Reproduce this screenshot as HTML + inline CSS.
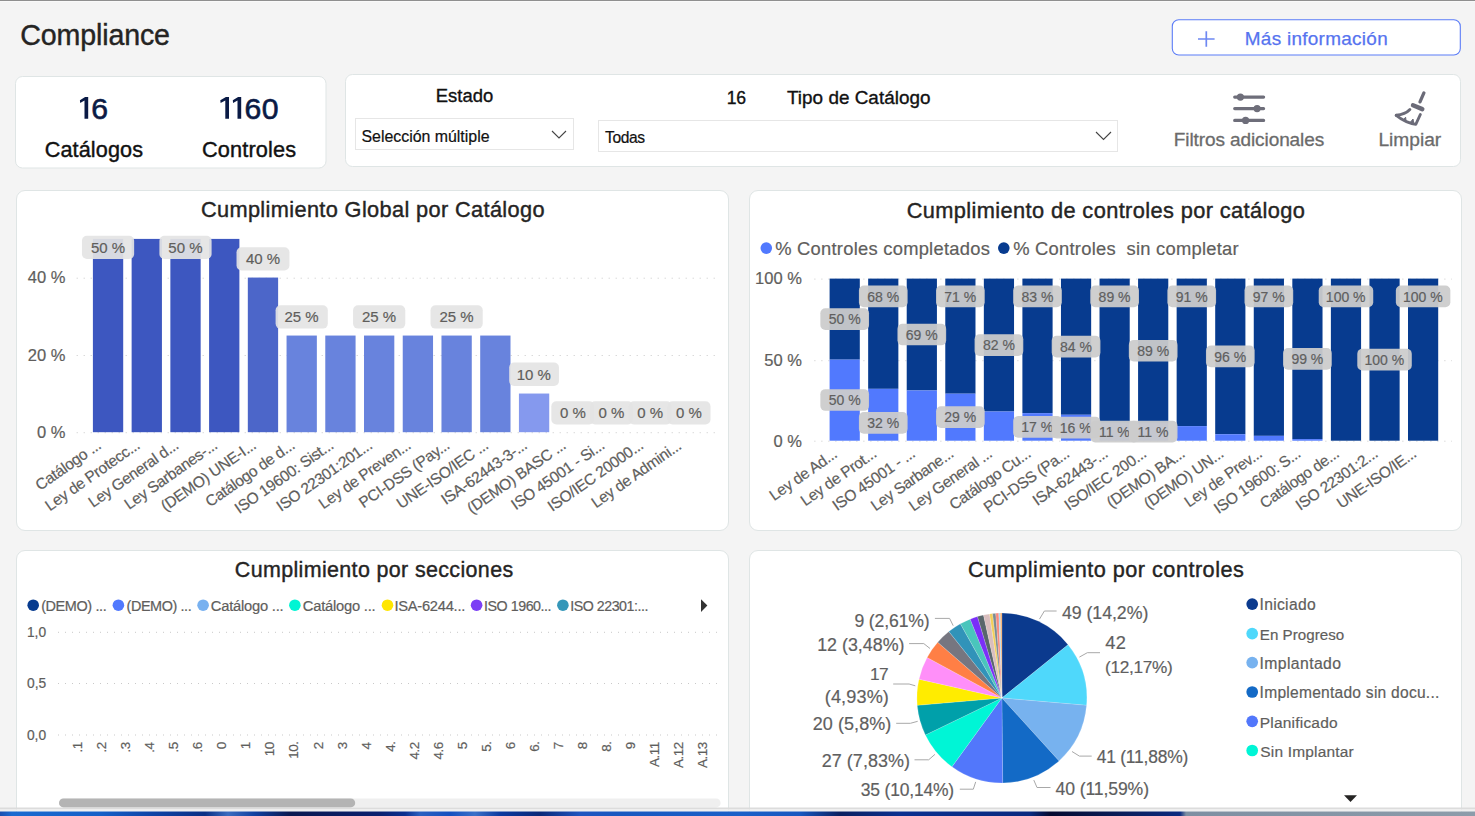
<!DOCTYPE html>
<html><head><meta charset="utf-8"><title>Compliance</title>
<style>html,body{margin:0;padding:0;background:#f4f4f4;overflow:hidden;width:1475px;height:816px}
svg{display:block} text{font-family:"Liberation Sans",sans-serif;white-space:pre}</style></head>
<body><svg width="1475" height="816" viewBox="0 0 1475 816">
<rect x="0" y="0" width="1475" height="816" fill="#f4f4f4"/>
<rect x="0" y="0" width="1475" height="1" fill="#8f8f8f"/>
<rect x="0" y="1" width="1475" height="1" fill="#f9f9f9"/>
<text x="20.27" y="44.70" font-size="28.60" letter-spacing="-0.137" fill="#252423" stroke="#252423" stroke-width="0.4">Compliance</text>
<rect x="1172.30" y="19.70" width="288.00" height="35.30" rx="6.5" fill="#ffffff" stroke="#5b7cf7" stroke-width="1.1"/>
<path d="M1198 39H1214.6M1206.3 31.2V46.7" stroke="#6e88f2" stroke-width="1.7" fill="none"/>
<text x="1244.78" y="44.70" font-size="18.96" letter-spacing="0.285" fill="#5673ef" stroke="#5673ef" stroke-width="0.25">Más información</text>
<rect x="15.50" y="76.50" width="310.50" height="91.50" rx="7" fill="#ffffff" stroke="#dfe5e5" stroke-width="1"/>
<path d="M88.20 97.0V118.8H84.50V100.60L80.20 102.90L79.90 100.30L85.10 97.0Z" fill="#0a1a45"/>
<path d="M229.00 97.0V118.8H225.30V100.60L220.60 102.90L220.30 100.30L225.90 97.0Z" fill="#0a1a45"/>
<path d="M241.20 97.0V118.8H237.50V100.60L233.10 102.90L232.80 100.30L238.10 97.0Z" fill="#0a1a45"/>
<text x="91.19" y="118.60" font-size="30.20" letter-spacing="0.000" fill="#0a1a45" stroke="#0a1a45" stroke-width="0.6">6</text>
<text x="244.49" y="118.60" font-size="30.20" letter-spacing="0.000" fill="#0a1a45" stroke="#0a1a45" stroke-width="0.6">6</text>
<text x="261.84" y="118.60" font-size="30.20" letter-spacing="0.000" fill="#0a1a45" stroke="#0a1a45" stroke-width="0.6">0</text>
<text x="44.72" y="156.80" font-size="21.65" letter-spacing="0.109" fill="#111111" stroke="#111111" stroke-width="0.4">Catálogos</text>
<text x="201.91" y="156.80" font-size="21.74" letter-spacing="0.152" fill="#111111" stroke="#111111" stroke-width="0.4">Controles</text>
<rect x="345.50" y="74.50" width="1115.00" height="92.00" rx="7" fill="#ffffff" stroke="#dfe5e5" stroke-width="1"/>
<text x="435.83" y="102.00" font-size="18.41" letter-spacing="0.003" fill="#111111" stroke="#111111" stroke-width="0.35">Estado</text>
<rect x="355.50" y="118.50" width="218.00" height="31.00" rx="0" fill="#ffffff" stroke="#e6e6e6" stroke-width="1"/>
<text x="361.48" y="141.90" font-size="15.92" letter-spacing="-0.009" fill="#111111" stroke="#111111" stroke-width="0.2">Selección múltiple</text>
<path d="M552 131L559 138L566 131" stroke="#444" stroke-width="1.1" fill="none"/>
<text x="726.78" y="103.70" font-size="17.60" letter-spacing="-0.229" fill="#111111" stroke="#111111" stroke-width="0.35">16</text>
<text x="787.02" y="103.70" font-size="18.89" letter-spacing="0.025" fill="#111111" stroke="#111111" stroke-width="0.35">Tipo de Catálogo</text>
<rect x="598.50" y="120.50" width="519.00" height="31.00" rx="0" fill="#ffffff" stroke="#e6e6e6" stroke-width="1"/>
<text x="605.09" y="142.90" font-size="15.62" letter-spacing="-0.403" fill="#111111" stroke="#111111" stroke-width="0.2">Todas</text>
<path d="M1096 132L1103.5 139.5L1111 132" stroke="#444" stroke-width="1.1" fill="none"/>
<g stroke="#6e6e7a" stroke-width="3.2" stroke-linecap="round" fill="#6e6e7a"><path d="M1234.7 97.1H1263.6M1234.7 108.6H1263.6M1234.7 120.4H1263.6"/><circle cx="1240.4" cy="97.1" r="2" /><circle cx="1257.1" cy="108.6" r="2"/><circle cx="1245.6" cy="120.4" r="2"/></g>
<text x="1173.78" y="145.60" font-size="19.04" letter-spacing="-0.104" fill="#6b6b6b" stroke="#6b6b6b" stroke-width="0.3">Filtros adicionales</text>
<g transform="translate(1385,85)" stroke="#6b6b78" fill="none" stroke-linecap="round" stroke-linejoin="round"><path d="M38.9 7.9 L35 16.9" stroke-width="3.3"/><path d="M28 20.3 L37.3 24.1" stroke-width="4.4"/><path d="M24.9 24.6 Q20.2 29.6 11.2 30.3" stroke-width="2.9"/><path d="M11.2 30.3 Q20 37.4 30.8 39.4 L35.4 29.4" stroke-width="2.8"/><path d="M18.8 34.4 L20.6 32.2 L21 35.2Z M25.8 36.8 L28 34 L28.6 37.4Z" fill="#6b6b78" stroke-width="1"/></g>
<text x="1378.46" y="145.60" font-size="19.21" letter-spacing="-0.034" fill="#6b6b6b" stroke="#6b6b6b" stroke-width="0.3">Limpiar</text>
<rect x="16.50" y="190.50" width="712.00" height="340.00" rx="8.5" fill="#ffffff" stroke="#dfe5e5" stroke-width="1"/>
<rect x="749.50" y="190.50" width="712.00" height="340.00" rx="8.5" fill="#ffffff" stroke="#dfe5e5" stroke-width="1"/>
<rect x="16.50" y="550.50" width="712.00" height="280.00" rx="8.5" fill="#ffffff" stroke="#dfe5e5" stroke-width="1"/>
<rect x="749.50" y="550.50" width="712.00" height="280.00" rx="8.5" fill="#ffffff" stroke="#dfe5e5" stroke-width="1"/>
<text x="200.91" y="217.00" font-size="21.75" letter-spacing="0.361" fill="#252423" stroke="#252423" stroke-width="0.4">Cumplimiento Global por Catálogo</text>
<path d="M76.7 278.2H718" stroke="#c9c9c9" stroke-width="1" stroke-dasharray="1 6"/>
<path d="M76.7 355.5H718" stroke="#c9c9c9" stroke-width="1" stroke-dasharray="1 6"/>
<path d="M76.7 432.7H718" stroke="#c9c9c9" stroke-width="1" stroke-dasharray="1 6"/>
<text x="27.81" y="282.70" font-size="16.52" letter-spacing="0.000" fill="#605e5c" stroke="#605e5c" stroke-width="0.2">40 %</text>
<text x="27.81" y="360.90" font-size="16.52" letter-spacing="0.000" fill="#605e5c" stroke="#605e5c" stroke-width="0.2">20 %</text>
<text x="37.00" y="438.00" font-size="16.52" letter-spacing="0.000" fill="#605e5c" stroke="#605e5c" stroke-width="0.2">0 %</text>
<rect x="92.90" y="238.90" width="30.30" height="193.30" rx="0" fill="#3d57c0"/>
<rect x="131.63" y="238.90" width="30.30" height="193.30" rx="0" fill="#3d57c0"/>
<rect x="170.36" y="238.90" width="30.30" height="193.30" rx="0" fill="#3d57c0"/>
<rect x="209.09" y="238.90" width="30.30" height="193.30" rx="0" fill="#3d57c0"/>
<rect x="247.82" y="277.56" width="30.30" height="154.64" rx="0" fill="#4c66c9"/>
<rect x="286.55" y="335.55" width="30.30" height="96.65" rx="0" fill="#6883dd"/>
<rect x="325.28" y="335.55" width="30.30" height="96.65" rx="0" fill="#6883dd"/>
<rect x="364.01" y="335.55" width="30.30" height="96.65" rx="0" fill="#6883dd"/>
<rect x="402.74" y="335.55" width="30.30" height="96.65" rx="0" fill="#6883dd"/>
<rect x="441.47" y="335.55" width="30.30" height="96.65" rx="0" fill="#6883dd"/>
<rect x="480.20" y="335.55" width="30.30" height="96.65" rx="0" fill="#6883dd"/>
<rect x="518.93" y="393.54" width="30.30" height="38.66" rx="0" fill="#8599ee"/>
<rect x="81.95" y="235.70" width="52.20" height="23.30" rx="5" fill="rgba(228,228,228,0.92)"/>
<text x="90.91" y="252.60" font-size="15.00" fill="#605e5c" stroke="#605e5c" stroke-width="0.2">50 %</text>
<rect x="159.41" y="235.70" width="52.20" height="23.30" rx="5" fill="rgba(228,228,228,0.92)"/>
<text x="168.37" y="252.60" font-size="15.00" fill="#605e5c" stroke="#605e5c" stroke-width="0.2">50 %</text>
<rect x="236.52" y="247.20" width="52.90" height="23.30" rx="5" fill="rgba(228,228,228,0.92)"/>
<text x="245.98" y="264.10" font-size="15.00" fill="#605e5c" stroke="#605e5c" stroke-width="0.2">40 %</text>
<rect x="275.60" y="305.30" width="52.20" height="23.30" rx="5" fill="rgba(228,228,228,0.92)"/>
<text x="284.49" y="322.20" font-size="15.00" fill="#605e5c" stroke="#605e5c" stroke-width="0.2">25 %</text>
<rect x="353.06" y="305.30" width="52.20" height="23.30" rx="5" fill="rgba(228,228,228,0.92)"/>
<text x="361.95" y="322.20" font-size="15.00" fill="#605e5c" stroke="#605e5c" stroke-width="0.2">25 %</text>
<rect x="430.52" y="305.30" width="52.20" height="23.30" rx="5" fill="rgba(228,228,228,0.92)"/>
<text x="439.41" y="322.20" font-size="15.00" fill="#605e5c" stroke="#605e5c" stroke-width="0.2">25 %</text>
<rect x="509.18" y="362.60" width="49.80" height="23.30" rx="5" fill="rgba(228,228,228,0.92)"/>
<text x="516.68" y="379.50" font-size="15.00" fill="#605e5c" stroke="#605e5c" stroke-width="0.2">10 %</text>
<rect x="551.31" y="401.20" width="43.00" height="23.30" rx="5" fill="rgba(228,228,228,0.92)"/>
<text x="559.88" y="418.10" font-size="15.00" fill="#605e5c" stroke="#605e5c" stroke-width="0.2">0 %</text>
<rect x="590.04" y="401.20" width="43.00" height="23.30" rx="5" fill="rgba(228,228,228,0.92)"/>
<text x="598.61" y="418.10" font-size="15.00" fill="#605e5c" stroke="#605e5c" stroke-width="0.2">0 %</text>
<rect x="628.77" y="401.20" width="43.00" height="23.30" rx="5" fill="rgba(228,228,228,0.92)"/>
<text x="637.34" y="418.10" font-size="15.00" fill="#605e5c" stroke="#605e5c" stroke-width="0.2">0 %</text>
<rect x="667.50" y="401.20" width="43.00" height="23.30" rx="5" fill="rgba(228,228,228,0.92)"/>
<text x="676.07" y="418.10" font-size="15.00" fill="#605e5c" stroke="#605e5c" stroke-width="0.2">0 %</text>
<text x="40.08" y="490.99" font-size="15.50" letter-spacing="-0.3" fill="#605e5c" stroke="#605e5c" stroke-width="0.2" transform="rotate(-35 40.08 490.99)">Catálogo ...</text>
<text x="49.70" y="511.38" font-size="15.50" letter-spacing="-0.3" fill="#605e5c" stroke="#605e5c" stroke-width="0.2" transform="rotate(-35 49.70 511.38)">Ley de Protecc...</text>
<text x="93.12" y="508.10" font-size="15.50" letter-spacing="-0.3" fill="#605e5c" stroke="#605e5c" stroke-width="0.2" transform="rotate(-35 93.12 508.10)">Ley General d...</text>
<text x="129.03" y="510.07" font-size="15.50" letter-spacing="-0.3" fill="#605e5c" stroke="#605e5c" stroke-width="0.2" transform="rotate(-35 129.03 510.07)">Ley Sarbanes-...</text>
<text x="165.46" y="511.68" font-size="15.50" letter-spacing="-0.3" fill="#605e5c" stroke="#605e5c" stroke-width="0.2" transform="rotate(-35 165.46 511.68)">(DEMO) UNE-I...</text>
<text x="210.00" y="507.61" font-size="15.50" letter-spacing="-0.3" fill="#605e5c" stroke="#605e5c" stroke-width="0.2" transform="rotate(-35 210.00 507.61)">Catálogo de d...</text>
<text x="239.36" y="514.17" font-size="15.50" letter-spacing="-0.3" fill="#605e5c" stroke="#605e5c" stroke-width="0.2" transform="rotate(-35 239.36 514.17)">ISO 19600: Sist...</text>
<text x="281.11" y="512.06" font-size="15.50" letter-spacing="-0.3" fill="#605e5c" stroke="#605e5c" stroke-width="0.2" transform="rotate(-35 281.11 512.06)">ISO 22301:201...</text>
<text x="323.38" y="509.58" font-size="15.50" letter-spacing="-0.3" fill="#605e5c" stroke="#605e5c" stroke-width="0.2" transform="rotate(-35 323.38 509.58)">Ley de Preven...</text>
<text x="363.55" y="508.57" font-size="15.50" letter-spacing="-0.3" fill="#605e5c" stroke="#605e5c" stroke-width="0.2" transform="rotate(-35 363.55 508.57)">PCI-DSS (Pay...</text>
<text x="401.34" y="509.23" font-size="15.50" letter-spacing="-0.3" fill="#605e5c" stroke="#605e5c" stroke-width="0.2" transform="rotate(-35 401.34 509.23)">UNE-ISO/IEC ...</text>
<text x="445.69" y="505.30" font-size="15.50" letter-spacing="-0.3" fill="#605e5c" stroke="#605e5c" stroke-width="0.2" transform="rotate(-35 445.69 505.30)">ISA-62443-3-...</text>
<text x="471.76" y="514.16" font-size="15.50" letter-spacing="-0.3" fill="#605e5c" stroke="#605e5c" stroke-width="0.2" transform="rotate(-35 471.76 514.16)">(DEMO) BASC ...</text>
<text x="515.87" y="510.39" font-size="15.50" letter-spacing="-0.3" fill="#605e5c" stroke="#605e5c" stroke-width="0.2" transform="rotate(-35 515.87 510.39)">ISO 45001 - Si...</text>
<text x="552.24" y="512.05" font-size="15.50" letter-spacing="-0.3" fill="#605e5c" stroke="#605e5c" stroke-width="0.2" transform="rotate(-35 552.24 512.05)">ISO/IEC 20000...</text>
<text x="595.91" y="508.59" font-size="15.50" letter-spacing="-0.3" fill="#605e5c" stroke="#605e5c" stroke-width="0.2" transform="rotate(-35 595.91 508.59)">Ley de Admini...</text>
<text x="906.71" y="217.80" font-size="21.81" letter-spacing="0.379" fill="#252423" stroke="#252423" stroke-width="0.4">Cumplimiento de controles por catálogo</text>
<circle cx="766.3" cy="248.1" r="5.8" fill="#5179fe"/>
<circle cx="1003.8" cy="248.1" r="5.8" fill="#073b8f"/>
<text x="775.16" y="254.50" font-size="18.34" letter-spacing="0.264" fill="#605e5c" stroke="#605e5c" stroke-width="0.2">% Controles completados</text>
<text x="1013.16" y="254.50" font-size="18.35" letter-spacing="0.251" fill="#605e5c" stroke="#605e5c" stroke-width="0.2">% Controles  sin completar</text>
<path d="M814.4 279.1H1452" stroke="#c9c9c9" stroke-width="1" stroke-dasharray="1 6"/>
<path d="M814.4 360.7H1452" stroke="#c9c9c9" stroke-width="1" stroke-dasharray="1 6"/>
<path d="M814.4 441.2H1452" stroke="#c9c9c9" stroke-width="1" stroke-dasharray="1 6"/>
<text x="755.12" y="284.30" font-size="16.52" letter-spacing="0.000" fill="#605e5c" stroke="#605e5c" stroke-width="0.2">100 %</text>
<text x="764.31" y="365.90" font-size="16.52" letter-spacing="0.000" fill="#605e5c" stroke="#605e5c" stroke-width="0.2">50 %</text>
<text x="773.50" y="447.10" font-size="16.52" letter-spacing="0.000" fill="#605e5c" stroke="#605e5c" stroke-width="0.2">0 %</text>
<rect x="829.60" y="278.60" width="30.20" height="81.05" rx="0" fill="#073b8f"/>
<rect x="829.60" y="359.65" width="30.20" height="81.05" rx="0" fill="#5179fe"/>
<rect x="868.16" y="278.60" width="30.20" height="110.23" rx="0" fill="#073b8f"/>
<rect x="868.16" y="388.83" width="30.20" height="51.87" rx="0" fill="#5179fe"/>
<rect x="906.72" y="278.60" width="30.20" height="111.85" rx="0" fill="#073b8f"/>
<rect x="906.72" y="390.45" width="30.20" height="50.25" rx="0" fill="#5179fe"/>
<rect x="945.28" y="278.60" width="30.20" height="115.09" rx="0" fill="#073b8f"/>
<rect x="945.28" y="393.69" width="30.20" height="47.01" rx="0" fill="#5179fe"/>
<rect x="983.84" y="278.60" width="30.20" height="132.92" rx="0" fill="#073b8f"/>
<rect x="983.84" y="411.52" width="30.20" height="29.18" rx="0" fill="#5179fe"/>
<rect x="1022.40" y="278.60" width="30.20" height="134.54" rx="0" fill="#073b8f"/>
<rect x="1022.40" y="413.14" width="30.20" height="27.56" rx="0" fill="#5179fe"/>
<rect x="1060.96" y="278.60" width="30.20" height="136.16" rx="0" fill="#073b8f"/>
<rect x="1060.96" y="414.76" width="30.20" height="25.94" rx="0" fill="#5179fe"/>
<rect x="1099.52" y="278.60" width="30.20" height="144.27" rx="0" fill="#073b8f"/>
<rect x="1099.52" y="422.87" width="30.20" height="17.83" rx="0" fill="#5179fe"/>
<rect x="1138.08" y="278.60" width="30.20" height="144.27" rx="0" fill="#073b8f"/>
<rect x="1138.08" y="422.87" width="30.20" height="17.83" rx="0" fill="#5179fe"/>
<rect x="1176.64" y="278.60" width="30.20" height="147.51" rx="0" fill="#073b8f"/>
<rect x="1176.64" y="426.11" width="30.20" height="14.59" rx="0" fill="#5179fe"/>
<rect x="1215.20" y="278.60" width="30.20" height="155.62" rx="0" fill="#073b8f"/>
<rect x="1215.20" y="434.22" width="30.20" height="6.48" rx="0" fill="#5179fe"/>
<rect x="1253.76" y="278.60" width="30.20" height="157.24" rx="0" fill="#073b8f"/>
<rect x="1253.76" y="435.84" width="30.20" height="4.86" rx="0" fill="#5179fe"/>
<rect x="1292.32" y="278.60" width="30.20" height="160.48" rx="0" fill="#073b8f"/>
<rect x="1292.32" y="439.08" width="30.20" height="1.62" rx="0" fill="#5179fe"/>
<rect x="1330.88" y="278.60" width="30.20" height="162.10" rx="0" fill="#073b8f"/>
<rect x="1369.44" y="278.60" width="30.20" height="162.10" rx="0" fill="#073b8f"/>
<rect x="1408.00" y="278.60" width="30.20" height="162.10" rx="0" fill="#073b8f"/>
<rect x="820.35" y="389.15" width="48.70" height="21.70" rx="5" fill="rgba(204,204,204,0.94)"/>
<text x="828.70" y="405.10" font-size="14.00" fill="#5f5f5f" stroke="#5f5f5f" stroke-width="0.2">50 %</text>
<rect x="858.91" y="412.05" width="48.70" height="21.70" rx="5" fill="rgba(204,204,204,0.94)"/>
<text x="867.30" y="428.00" font-size="14.00" fill="#5f5f5f" stroke="#5f5f5f" stroke-width="0.2">32 %</text>
<rect x="936.03" y="406.35" width="48.70" height="21.70" rx="5" fill="rgba(204,204,204,0.94)"/>
<text x="944.31" y="422.30" font-size="14.00" fill="#5f5f5f" stroke="#5f5f5f" stroke-width="0.2">29 %</text>
<rect x="1013.15" y="415.95" width="48.70" height="21.70" rx="5" fill="rgba(204,204,204,0.94)"/>
<text x="1021.26" y="431.90" font-size="14.00" fill="#5f5f5f" stroke="#5f5f5f" stroke-width="0.2">17 %</text>
<rect x="1051.71" y="416.75" width="48.70" height="21.70" rx="5" fill="rgba(204,204,204,0.94)"/>
<text x="1059.82" y="432.70" font-size="14.00" fill="#5f5f5f" stroke="#5f5f5f" stroke-width="0.2">16 %</text>
<rect x="1090.27" y="420.85" width="48.70" height="21.70" rx="5" fill="rgba(204,204,204,0.94)"/>
<text x="1098.90" y="436.80" font-size="14.00" fill="#5f5f5f" stroke="#5f5f5f" stroke-width="0.2">11 %</text>
<rect x="1128.83" y="420.85" width="48.70" height="21.70" rx="5" fill="rgba(204,204,204,0.94)"/>
<text x="1137.46" y="436.80" font-size="14.00" fill="#5f5f5f" stroke="#5f5f5f" stroke-width="0.2">11 %</text>
<rect x="820.35" y="308.27" width="48.70" height="21.70" rx="5" fill="rgba(204,204,204,0.94)"/>
<text x="828.70" y="324.23" font-size="14.00" fill="#5f5f5f" stroke="#5f5f5f" stroke-width="0.2">50 %</text>
<rect x="858.91" y="285.55" width="48.70" height="21.70" rx="5" fill="rgba(204,204,204,0.94)"/>
<text x="867.19" y="301.50" font-size="14.00" fill="#5f5f5f" stroke="#5f5f5f" stroke-width="0.2">68 %</text>
<rect x="897.47" y="323.67" width="48.70" height="21.70" rx="5" fill="rgba(204,204,204,0.94)"/>
<text x="905.75" y="339.62" font-size="14.00" fill="#5f5f5f" stroke="#5f5f5f" stroke-width="0.2">69 %</text>
<rect x="936.03" y="285.55" width="48.70" height="21.70" rx="5" fill="rgba(204,204,204,0.94)"/>
<text x="944.31" y="301.50" font-size="14.00" fill="#5f5f5f" stroke="#5f5f5f" stroke-width="0.2">71 %</text>
<rect x="974.59" y="334.21" width="48.70" height="21.70" rx="5" fill="rgba(204,204,204,0.94)"/>
<text x="982.94" y="350.16" font-size="14.00" fill="#5f5f5f" stroke="#5f5f5f" stroke-width="0.2">82 %</text>
<rect x="1013.15" y="285.55" width="48.70" height="21.70" rx="5" fill="rgba(204,204,204,0.94)"/>
<text x="1021.50" y="301.50" font-size="14.00" fill="#5f5f5f" stroke="#5f5f5f" stroke-width="0.2">83 %</text>
<rect x="1051.71" y="335.83" width="48.70" height="21.70" rx="5" fill="rgba(204,204,204,0.94)"/>
<text x="1060.06" y="351.78" font-size="14.00" fill="#5f5f5f" stroke="#5f5f5f" stroke-width="0.2">84 %</text>
<rect x="1090.27" y="285.55" width="48.70" height="21.70" rx="5" fill="rgba(204,204,204,0.94)"/>
<text x="1098.62" y="301.50" font-size="14.00" fill="#5f5f5f" stroke="#5f5f5f" stroke-width="0.2">89 %</text>
<rect x="1128.83" y="339.88" width="48.70" height="21.70" rx="5" fill="rgba(204,204,204,0.94)"/>
<text x="1137.18" y="355.83" font-size="14.00" fill="#5f5f5f" stroke="#5f5f5f" stroke-width="0.2">89 %</text>
<rect x="1167.39" y="285.55" width="48.70" height="21.70" rx="5" fill="rgba(204,204,204,0.94)"/>
<text x="1175.71" y="301.50" font-size="14.00" fill="#5f5f5f" stroke="#5f5f5f" stroke-width="0.2">91 %</text>
<rect x="1205.95" y="345.56" width="48.70" height="21.70" rx="5" fill="rgba(204,204,204,0.94)"/>
<text x="1214.27" y="361.51" font-size="14.00" fill="#5f5f5f" stroke="#5f5f5f" stroke-width="0.2">96 %</text>
<rect x="1244.51" y="285.55" width="48.70" height="21.70" rx="5" fill="rgba(204,204,204,0.94)"/>
<text x="1252.83" y="301.50" font-size="14.00" fill="#5f5f5f" stroke="#5f5f5f" stroke-width="0.2">97 %</text>
<rect x="1283.07" y="347.99" width="48.70" height="21.70" rx="5" fill="rgba(204,204,204,0.94)"/>
<text x="1291.39" y="363.94" font-size="14.00" fill="#5f5f5f" stroke="#5f5f5f" stroke-width="0.2">99 %</text>
<rect x="1318.73" y="285.55" width="54.50" height="21.70" rx="5" fill="rgba(204,204,204,0.94)"/>
<text x="1325.85" y="301.50" font-size="14.00" fill="#5f5f5f" stroke="#5f5f5f" stroke-width="0.2">100 %</text>
<rect x="1357.29" y="348.80" width="54.50" height="21.70" rx="5" fill="rgba(204,204,204,0.94)"/>
<text x="1364.41" y="364.75" font-size="14.00" fill="#5f5f5f" stroke="#5f5f5f" stroke-width="0.2">100 %</text>
<rect x="1395.85" y="285.55" width="54.50" height="21.70" rx="5" fill="rgba(204,204,204,0.94)"/>
<text x="1402.97" y="301.50" font-size="14.00" fill="#5f5f5f" stroke="#5f5f5f" stroke-width="0.2">100 %</text>
<text x="774.06" y="501.37" font-size="15.50" letter-spacing="-0.3" fill="#605e5c" stroke="#605e5c" stroke-width="0.2" transform="rotate(-35 774.06 501.37)">Ley de Ad...</text>
<text x="805.35" y="506.46" font-size="15.50" letter-spacing="-0.3" fill="#605e5c" stroke="#605e5c" stroke-width="0.2" transform="rotate(-35 805.35 506.46)">Ley de Prot...</text>
<text x="837.10" y="511.23" font-size="15.50" letter-spacing="-0.3" fill="#605e5c" stroke="#605e5c" stroke-width="0.2" transform="rotate(-35 837.10 511.23)">ISO 45001 - ...</text>
<text x="875.40" y="511.41" font-size="15.50" letter-spacing="-0.3" fill="#605e5c" stroke="#605e5c" stroke-width="0.2" transform="rotate(-35 875.40 511.41)">Ley Sarbane...</text>
<text x="913.52" y="511.72" font-size="15.50" letter-spacing="-0.3" fill="#605e5c" stroke="#605e5c" stroke-width="0.2" transform="rotate(-35 913.52 511.72)">Ley General ...</text>
<text x="953.94" y="510.41" font-size="15.50" letter-spacing="-0.3" fill="#605e5c" stroke="#605e5c" stroke-width="0.2" transform="rotate(-35 953.94 510.41)">Catálogo Cu...</text>
<text x="988.30" y="513.36" font-size="15.50" letter-spacing="-0.3" fill="#605e5c" stroke="#605e5c" stroke-width="0.2" transform="rotate(-35 988.30 513.36)">PCI-DSS (Pa...</text>
<text x="1037.17" y="506.14" font-size="15.50" letter-spacing="-0.3" fill="#605e5c" stroke="#605e5c" stroke-width="0.2" transform="rotate(-35 1037.17 506.14)">ISA-62443-...</text>
<text x="1068.93" y="510.90" font-size="15.50" letter-spacing="-0.3" fill="#605e5c" stroke="#605e5c" stroke-width="0.2" transform="rotate(-35 1068.93 510.90)">ISO/IEC 200...</text>
<text x="1111.26" y="508.26" font-size="15.50" letter-spacing="-0.3" fill="#605e5c" stroke="#605e5c" stroke-width="0.2" transform="rotate(-35 1111.26 508.26)">(DEMO) BA...</text>
<text x="1148.42" y="509.24" font-size="15.50" letter-spacing="-0.3" fill="#605e5c" stroke="#605e5c" stroke-width="0.2" transform="rotate(-35 1148.42 509.24)">(DEMO) UN...</text>
<text x="1189.07" y="507.78" font-size="15.50" letter-spacing="-0.3" fill="#605e5c" stroke="#605e5c" stroke-width="0.2" transform="rotate(-35 1189.07 507.78)">Ley de Prev...</text>
<text x="1218.46" y="514.20" font-size="15.50" letter-spacing="-0.3" fill="#605e5c" stroke="#605e5c" stroke-width="0.2" transform="rotate(-35 1218.46 514.20)">ISO 19600: S...</text>
<text x="1264.53" y="508.94" font-size="15.50" letter-spacing="-0.3" fill="#605e5c" stroke="#605e5c" stroke-width="0.2" transform="rotate(-35 1264.53 508.94)">Catálogo de...</text>
<text x="1300.27" y="510.91" font-size="15.50" letter-spacing="-0.3" fill="#605e5c" stroke="#605e5c" stroke-width="0.2" transform="rotate(-35 1300.27 510.91)">ISO 22301:2...</text>
<text x="1341.45" y="509.08" font-size="15.50" letter-spacing="-0.3" fill="#605e5c" stroke="#605e5c" stroke-width="0.2" transform="rotate(-35 1341.45 509.08)">UNE-ISO/IE...</text>
<text x="234.83" y="577.00" font-size="21.45" letter-spacing="0.361" fill="#252423" stroke="#252423" stroke-width="0.4">Cumplimiento por secciones</text>
<circle cx="33.2" cy="605.2" r="5.8" fill="#073b8f"/>
<text x="41.13" y="611.00" font-size="14.46" letter-spacing="-0.392" fill="#605e5c" stroke="#605e5c" stroke-width="0.2">(DEMO) ...</text>
<circle cx="118.4" cy="605.2" r="5.8" fill="#5179fe"/>
<text x="126.54" y="611.00" font-size="14.41" letter-spacing="-0.414" fill="#605e5c" stroke="#605e5c" stroke-width="0.2">(DEMO) ...</text>
<circle cx="203.1" cy="605.2" r="5.8" fill="#78b1f0"/>
<text x="210.86" y="611.00" font-size="14.72" letter-spacing="-0.224" fill="#605e5c" stroke="#605e5c" stroke-width="0.2">Catálogo ...</text>
<circle cx="294.9" cy="605.2" r="5.8" fill="#00f5d4"/>
<text x="302.86" y="611.00" font-size="14.72" letter-spacing="-0.224" fill="#605e5c" stroke="#605e5c" stroke-width="0.2">Catálogo ...</text>
<circle cx="387.5" cy="605.2" r="5.8" fill="#ffe600"/>
<text x="394.38" y="611.00" font-size="14.70" letter-spacing="-0.251" fill="#605e5c" stroke="#605e5c" stroke-width="0.2">ISA-6244...</text>
<circle cx="476.6" cy="605.2" r="5.8" fill="#7b3ff5"/>
<text x="484.02" y="611.00" font-size="14.27" letter-spacing="-0.464" fill="#605e5c" stroke="#605e5c" stroke-width="0.2">ISO 1960...</text>
<circle cx="562.9" cy="605.2" r="5.8" fill="#3597b9"/>
<text x="570.22" y="611.00" font-size="14.23" letter-spacing="-0.469" fill="#605e5c" stroke="#605e5c" stroke-width="0.2">ISO 22301:...</text>
<path d="M701 599.3L707.4 605.6L701 612Z" fill="#333"/>
<path d="M58 632.3H720" stroke="#c9c9c9" stroke-width="1" stroke-dasharray="1 6"/>
<path d="M58 683.5H720" stroke="#c9c9c9" stroke-width="1" stroke-dasharray="1 6"/>
<path d="M58 735.0H720" stroke="#c9c9c9" stroke-width="1" stroke-dasharray="1 6"/>
<text x="26.96" y="637.10" font-size="13.77" letter-spacing="0.000" fill="#605e5c" stroke="#605e5c" stroke-width="0.2">1,0</text>
<text x="27.03" y="687.80" font-size="13.77" letter-spacing="0.000" fill="#605e5c" stroke="#605e5c" stroke-width="0.2">0,5</text>
<text x="26.96" y="739.60" font-size="13.77" letter-spacing="0.000" fill="#605e5c" stroke="#605e5c" stroke-width="0.2">0,0</text>
<text x="81.92" y="752.41" font-size="13.40" letter-spacing="-0.45" fill="#605e5c" stroke="#605e5c" stroke-width="0.2" transform="rotate(-90 81.92 752.41)">.1</text>
<text x="105.98" y="752.41" font-size="13.40" letter-spacing="-0.45" fill="#605e5c" stroke="#605e5c" stroke-width="0.2" transform="rotate(-90 105.98 752.41)">.2</text>
<text x="130.04" y="752.47" font-size="13.40" letter-spacing="-0.45" fill="#605e5c" stroke="#605e5c" stroke-width="0.2" transform="rotate(-90 130.04 752.47)">.3</text>
<text x="154.10" y="752.67" font-size="13.40" letter-spacing="-0.45" fill="#605e5c" stroke="#605e5c" stroke-width="0.2" transform="rotate(-90 154.10 752.67)">.4</text>
<text x="178.16" y="752.47" font-size="13.40" letter-spacing="-0.45" fill="#605e5c" stroke="#605e5c" stroke-width="0.2" transform="rotate(-90 178.16 752.47)">.5</text>
<text x="202.22" y="752.47" font-size="13.40" letter-spacing="-0.45" fill="#605e5c" stroke="#605e5c" stroke-width="0.2" transform="rotate(-90 202.22 752.47)">.6</text>
<text x="226.28" y="749.27" font-size="13.40" letter-spacing="-0.45" fill="#605e5c" stroke="#605e5c" stroke-width="0.2" transform="rotate(-90 226.28 749.27)">0</text>
<text x="250.34" y="749.13" font-size="13.40" letter-spacing="-0.45" fill="#605e5c" stroke="#605e5c" stroke-width="0.2" transform="rotate(-90 250.34 749.13)">1</text>
<text x="274.40" y="756.27" font-size="13.40" letter-spacing="-0.45" fill="#605e5c" stroke="#605e5c" stroke-width="0.2" transform="rotate(-90 274.40 756.27)">10</text>
<text x="298.46" y="758.85" font-size="13.40" letter-spacing="-0.45" fill="#605e5c" stroke="#605e5c" stroke-width="0.2" transform="rotate(-90 298.46 758.85)">10.</text>
<text x="322.52" y="749.13" font-size="13.40" letter-spacing="-0.45" fill="#605e5c" stroke="#605e5c" stroke-width="0.2" transform="rotate(-90 322.52 749.13)">2</text>
<text x="346.58" y="749.20" font-size="13.40" letter-spacing="-0.45" fill="#605e5c" stroke="#605e5c" stroke-width="0.2" transform="rotate(-90 346.58 749.20)">3</text>
<text x="370.64" y="749.40" font-size="13.40" letter-spacing="-0.45" fill="#605e5c" stroke="#605e5c" stroke-width="0.2" transform="rotate(-90 370.64 749.40)">4</text>
<text x="394.70" y="751.85" font-size="13.40" letter-spacing="-0.45" fill="#605e5c" stroke="#605e5c" stroke-width="0.2" transform="rotate(-90 394.70 751.85)">4.</text>
<text x="418.76" y="759.41" font-size="13.40" letter-spacing="-0.45" fill="#605e5c" stroke="#605e5c" stroke-width="0.2" transform="rotate(-90 418.76 759.41)">4.2</text>
<text x="442.82" y="759.48" font-size="13.40" letter-spacing="-0.45" fill="#605e5c" stroke="#605e5c" stroke-width="0.2" transform="rotate(-90 442.82 759.48)">4.6</text>
<text x="466.88" y="749.20" font-size="13.40" letter-spacing="-0.45" fill="#605e5c" stroke="#605e5c" stroke-width="0.2" transform="rotate(-90 466.88 749.20)">5</text>
<text x="490.94" y="751.85" font-size="13.40" letter-spacing="-0.45" fill="#605e5c" stroke="#605e5c" stroke-width="0.2" transform="rotate(-90 490.94 751.85)">5.</text>
<text x="515.00" y="749.20" font-size="13.40" letter-spacing="-0.45" fill="#605e5c" stroke="#605e5c" stroke-width="0.2" transform="rotate(-90 515.00 749.20)">6</text>
<text x="539.06" y="751.85" font-size="13.40" letter-spacing="-0.45" fill="#605e5c" stroke="#605e5c" stroke-width="0.2" transform="rotate(-90 539.06 751.85)">6.</text>
<text x="563.12" y="749.13" font-size="13.40" letter-spacing="-0.45" fill="#605e5c" stroke="#605e5c" stroke-width="0.2" transform="rotate(-90 563.12 749.13)">7</text>
<text x="587.18" y="749.20" font-size="13.40" letter-spacing="-0.45" fill="#605e5c" stroke="#605e5c" stroke-width="0.2" transform="rotate(-90 587.18 749.20)">8</text>
<text x="611.24" y="751.85" font-size="13.40" letter-spacing="-0.45" fill="#605e5c" stroke="#605e5c" stroke-width="0.2" transform="rotate(-90 611.24 751.85)">8.</text>
<text x="635.30" y="749.13" font-size="13.40" letter-spacing="-0.45" fill="#605e5c" stroke="#605e5c" stroke-width="0.2" transform="rotate(-90 635.30 749.13)">9</text>
<text x="659.36" y="766.90" font-size="13.40" letter-spacing="-0.45" fill="#605e5c" stroke="#605e5c" stroke-width="0.2" transform="rotate(-90 659.36 766.90)">A.11</text>
<text x="683.42" y="767.90" font-size="13.40" letter-spacing="-0.45" fill="#605e5c" stroke="#605e5c" stroke-width="0.2" transform="rotate(-90 683.42 767.90)">A.12</text>
<text x="707.48" y="767.96" font-size="13.40" letter-spacing="-0.45" fill="#605e5c" stroke="#605e5c" stroke-width="0.2" transform="rotate(-90 707.48 767.96)">A.13</text>
<rect x="59.00" y="798.50" width="661.60" height="8.90" rx="4.45" fill="#efefef"/>
<rect x="59.00" y="798.50" width="296.20" height="8.90" rx="4.45" fill="#b4b4b4"/>
<text x="968.12" y="577.00" font-size="21.69" letter-spacing="0.468" fill="#252423" stroke="#252423" stroke-width="0.4">Cumplimiento por controles</text>
<path d="M1001.9 698.0L1001.90 613.00A85.0 85.0 0 0 1 1068.08 644.66Z" fill="#0b3a8e" stroke="#ffffff" stroke-width="0.2" stroke-opacity="0.8"/>
<path d="M1001.9 698.0L1068.08 644.66A85.0 85.0 0 0 1 1086.58 705.34Z" fill="#4fd8fb" stroke="#ffffff" stroke-width="0.2" stroke-opacity="0.8"/>
<path d="M1001.9 698.0L1086.58 705.34A85.0 85.0 0 0 1 1059.06 760.91Z" fill="#77b2ef" stroke="#ffffff" stroke-width="0.2" stroke-opacity="0.8"/>
<path d="M1001.9 698.0L1059.06 760.91A85.0 85.0 0 0 1 1002.67 783.00Z" fill="#136ac6" stroke="#ffffff" stroke-width="0.2" stroke-opacity="0.8"/>
<path d="M1001.9 698.0L1002.67 783.00A85.0 85.0 0 0 1 951.94 766.77Z" fill="#5277fb" stroke="#ffffff" stroke-width="0.2" stroke-opacity="0.8"/>
<path d="M1001.9 698.0L951.94 766.77A85.0 85.0 0 0 1 925.39 735.03Z" fill="#00f5d6" stroke="#ffffff" stroke-width="0.2" stroke-opacity="0.8"/>
<path d="M1001.9 698.0L925.39 735.03A85.0 85.0 0 0 1 917.22 705.34Z" fill="#00a0aa" stroke="#ffffff" stroke-width="0.2" stroke-opacity="0.8"/>
<path d="M1001.9 698.0L917.22 705.34A85.0 85.0 0 0 1 919.01 679.19Z" fill="#ffec00" stroke="#ffffff" stroke-width="0.2" stroke-opacity="0.8"/>
<path d="M1001.9 698.0L919.01 679.19A85.0 85.0 0 0 1 927.15 657.53Z" fill="#ff8ff9" stroke="#ffffff" stroke-width="0.2" stroke-opacity="0.8"/>
<path d="M1001.9 698.0L927.15 657.53A85.0 85.0 0 0 1 937.71 642.28Z" fill="#ff7f45" stroke="#ffffff" stroke-width="0.2" stroke-opacity="0.8"/>
<path d="M1001.9 698.0L937.71 642.28A85.0 85.0 0 0 1 948.86 631.58Z" fill="#767680" stroke="#ffffff" stroke-width="0.2" stroke-opacity="0.8"/>
<path d="M1001.9 698.0L948.86 631.58A85.0 85.0 0 0 1 960.41 623.81Z" fill="#3193b9" stroke="#ffffff" stroke-width="0.2" stroke-opacity="0.8"/>
<path d="M1001.9 698.0L960.41 623.81A85.0 85.0 0 0 1 970.18 619.14Z" fill="#4ac5bc" stroke="#ffffff" stroke-width="0.2" stroke-opacity="0.8"/>
<path d="M1001.9 698.0L970.18 619.14A85.0 85.0 0 0 1 977.48 616.58Z" fill="#7a2ff8" stroke="#ffffff" stroke-width="0.2" stroke-opacity="0.8"/>
<path d="M1001.9 698.0L977.48 616.58A85.0 85.0 0 0 1 983.47 615.02Z" fill="#59666b" stroke="#ffffff" stroke-width="0.2" stroke-opacity="0.8"/>
<path d="M1001.9 698.0L983.47 615.02A85.0 85.0 0 0 1 989.56 613.90Z" fill="#d9bebe" stroke="#ffffff" stroke-width="0.2" stroke-opacity="0.8"/>
<path d="M1001.9 698.0L989.56 613.90A85.0 85.0 0 0 1 992.63 613.51Z" fill="#f3cf5a" stroke="#ffffff" stroke-width="0.2" stroke-opacity="0.8"/>
<path d="M1001.9 698.0L992.63 613.51A85.0 85.0 0 0 1 995.71 613.23Z" fill="#7b8b91" stroke="#ffffff" stroke-width="0.2" stroke-opacity="0.8"/>
<path d="M1001.9 698.0L995.71 613.23A85.0 85.0 0 0 1 998.80 613.06Z" fill="#f68b7e" stroke="#ffffff" stroke-width="0.2" stroke-opacity="0.8"/>
<path d="M1001.9 698.0L998.80 613.06A85.0 85.0 0 0 1 1000.35 613.01Z" fill="#a6d9ef" stroke="#ffffff" stroke-width="0.2" stroke-opacity="0.8"/>
<path d="M1001.9 698.0L1000.35 613.01A85.0 85.0 0 0 1 1001.90 613.00Z" fill="#f4a55e" stroke="#ffffff" stroke-width="0.2" stroke-opacity="0.8"/>
<text x="1061.95" y="619.10" font-size="17.74" letter-spacing="-0.045" fill="#5f5f5f" stroke="#5f5f5f" stroke-width="0.2">49 (14,2%)</text>
<text x="1105.23" y="649.00" font-size="18.28" letter-spacing="0.476" fill="#5f5f5f" stroke="#5f5f5f" stroke-width="0.2">42</text>
<text x="1105.06" y="673.00" font-size="17.25" letter-spacing="-0.323" fill="#5f5f5f" stroke="#5f5f5f" stroke-width="0.2">(12,17%)</text>
<text x="1096.65" y="763.00" font-size="17.44" letter-spacing="-0.205" fill="#5f5f5f" stroke="#5f5f5f" stroke-width="0.2">41 (11,88%)</text>
<text x="1055.55" y="794.90" font-size="17.61" letter-spacing="-0.115" fill="#5f5f5f" stroke="#5f5f5f" stroke-width="0.2">40 (11,59%)</text>
<text x="860.79" y="796.00" font-size="17.48" letter-spacing="-0.183" fill="#5f5f5f" stroke="#5f5f5f" stroke-width="0.2">35 (10,14%)</text>
<text x="821.70" y="767.40" font-size="17.95" letter-spacing="0.068" fill="#5f5f5f" stroke="#5f5f5f" stroke-width="0.2">27 (7,83%)</text>
<text x="812.70" y="729.90" font-size="17.98" letter-spacing="0.084" fill="#5f5f5f" stroke="#5f5f5f" stroke-width="0.2">20 (5,8%)</text>
<text x="869.90" y="679.60" font-size="17.29" letter-spacing="-0.534" fill="#5f5f5f" stroke="#5f5f5f" stroke-width="0.2">17</text>
<text x="824.72" y="702.90" font-size="18.08" letter-spacing="0.141" fill="#5f5f5f" stroke="#5f5f5f" stroke-width="0.2">(4,93%)</text>
<text x="817.16" y="651.00" font-size="17.84" letter-spacing="0.010" fill="#5f5f5f" stroke="#5f5f5f" stroke-width="0.2">12 (3,48%)</text>
<text x="854.41" y="626.50" font-size="17.60" letter-spacing="-0.122" fill="#5f5f5f" stroke="#5f5f5f" stroke-width="0.2">9 (2,61%)</text>
<path d="M1039.5 619.1L1044.4 611L1056.6 611" stroke="#a8a8a8" stroke-width="1" fill="none"/>
<path d="M1079.4 657.1L1087.3 652.7L1100 652.7" stroke="#a8a8a8" stroke-width="1" fill="none"/>
<path d="M1072 751.5L1079.4 756.1L1091.7 756.1" stroke="#a8a8a8" stroke-width="1" fill="none"/>
<path d="M1033.8 780.1L1037 787.5L1050.5 787.5" stroke="#a8a8a8" stroke-width="1" fill="none"/>
<path d="M959.8 789.2L973.3 789.2L975.7 781.9" stroke="#a8a8a8" stroke-width="1" fill="none"/>
<path d="M914.5 759.8L928.7 759.8L934.9 754.4" stroke="#a8a8a8" stroke-width="1" fill="none"/>
<path d="M896.2 723.3L910.4 723.3L917.7 721.3" stroke="#a8a8a8" stroke-width="1" fill="none"/>
<path d="M893.2 684L909.1 684L915.3 685.8" stroke="#a8a8a8" stroke-width="1" fill="none"/>
<path d="M909.1 643.6L923.8 643.6L930 648.5" stroke="#a8a8a8" stroke-width="1" fill="none"/>
<path d="M934.9 618.4L949.6 618.4L953.2 625.7" stroke="#a8a8a8" stroke-width="1" fill="none"/>
<circle cx="1252.2" cy="604.1" r="5.85" fill="#0b3a8e"/>
<text x="1259.59" y="610.30" font-size="15.68" letter-spacing="0.288" fill="#605e5c" stroke="#605e5c" stroke-width="0.2">Iniciado</text>
<circle cx="1252.2" cy="633.6" r="5.85" fill="#4fd8fb"/>
<text x="1259.79" y="639.60" font-size="15.14" letter-spacing="0.037" fill="#605e5c" stroke="#605e5c" stroke-width="0.2">En Progreso</text>
<circle cx="1252.2" cy="662.6" r="5.85" fill="#77b2ef"/>
<text x="1259.58" y="668.80" font-size="15.78" letter-spacing="0.378" fill="#605e5c" stroke="#605e5c" stroke-width="0.2">Implantado</text>
<circle cx="1252.2" cy="692.0" r="5.85" fill="#136ac6"/>
<text x="1259.60" y="698.10" font-size="15.59" letter-spacing="0.247" fill="#605e5c" stroke="#605e5c" stroke-width="0.2">Implementado sin docu...</text>
<circle cx="1252.2" cy="721.3" r="5.85" fill="#5277fb"/>
<text x="1259.76" y="727.90" font-size="15.50" letter-spacing="0.205" fill="#605e5c" stroke="#605e5c" stroke-width="0.2">Planificado</text>
<circle cx="1252.2" cy="750.5" r="5.85" fill="#00f5d6"/>
<text x="1260.30" y="757.00" font-size="15.47" letter-spacing="0.195" fill="#605e5c" stroke="#605e5c" stroke-width="0.2">Sin Implantar</text>
<path d="M1344 795.3H1357L1350.5 802Z" fill="#252423"/>
<rect x="0" y="807.5" width="1475" height="2" fill="#dcdcdc"/>
<rect x="0" y="809.5" width="1475" height="2" fill="#f0f0f0"/>
<defs><linearGradient id="tb" gradientUnits="userSpaceOnUse" x1="0" x2="1475" y1="0" y2="0"><stop offset="0.0000" stop-color="#1a4fb0"/><stop offset="0.0081" stop-color="#1a6ad0"/><stop offset="0.0678" stop-color="#1560c8"/><stop offset="0.1017" stop-color="#0f45a8"/><stop offset="0.1390" stop-color="#0a2f85"/><stop offset="0.1546" stop-color="#3a6cc0"/><stop offset="0.1729" stop-color="#1040a0"/><stop offset="0.1966" stop-color="#0a1850"/><stop offset="0.2576" stop-color="#0a2070"/><stop offset="0.2746" stop-color="#0a2f90"/><stop offset="0.2847" stop-color="#2a60c0"/><stop offset="0.3051" stop-color="#1550c0"/><stop offset="0.3220" stop-color="#3a70c8"/><stop offset="0.3390" stop-color="#0c3aa0"/><stop offset="0.3661" stop-color="#0a2878"/><stop offset="0.3932" stop-color="#1f55c0"/><stop offset="0.4203" stop-color="#1858c0"/><stop offset="0.5017" stop-color="#1a60c8"/><stop offset="0.5424" stop-color="#1858c0"/><stop offset="0.5695" stop-color="#0a2060"/><stop offset="0.6102" stop-color="#0a3090"/><stop offset="0.6983" stop-color="#0a2a80"/><stop offset="0.7119" stop-color="#050a30"/><stop offset="0.7661" stop-color="#0a2060"/><stop offset="0.8000" stop-color="#0a2a80"/><stop offset="0.8041" stop-color="#7d8fa2"/><stop offset="1.0000" stop-color="#8d9caa"/></linearGradient></defs>
<rect x="0" y="811.5" width="1475" height="4.5" fill="url(#tb)"/>
</svg></body></html>
